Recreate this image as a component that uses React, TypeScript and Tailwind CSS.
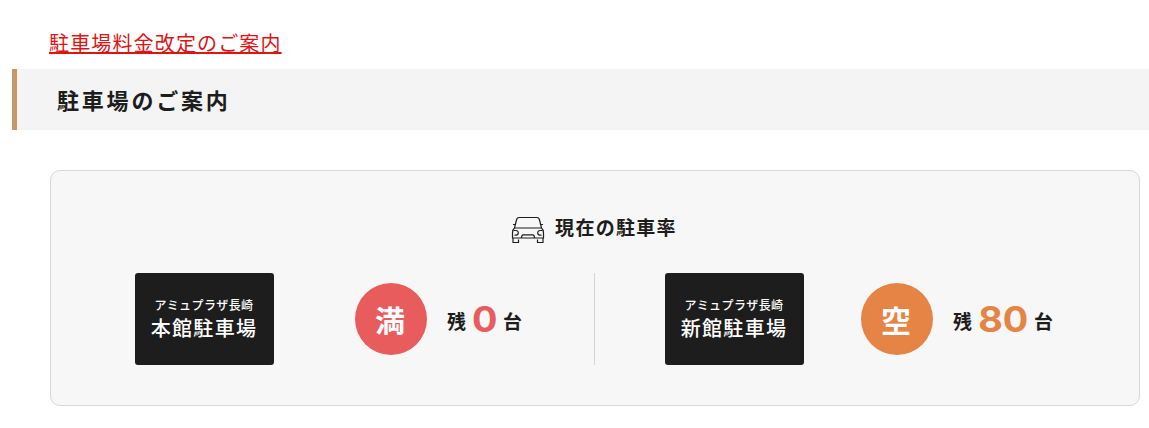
import clsx from 'clsx'

type ParkingLot = {
  name: string
  status: string
  remaining: number
  circleClass: string
  countClass: string
}

const lots: ParkingLot[] = [
  {
    name: '本館駐車場',
    status: '満',
    remaining: 0,
    circleClass: 'bg-[#e95c5d] ml-[81px]',
    countClass: 'text-[#e95c5d] w-[25px]',
  },
  {
    name: '新館駐車場',
    status: '空',
    remaining: 80,
    circleClass: 'bg-[#e68445] ml-[57px]',
    countClass: 'text-[#e68445] w-[50px]',
  },
]

function CarIcon() {
  return (
    <svg
      className="h-[28px] w-[34px] shrink-0"
      viewBox="0 0 34 28"
      fill="none"
      stroke="#1d1d1d"
      strokeWidth="1.2"
      strokeLinejoin="round"
      aria-hidden="true"
    >
      <path d="M3.500 12 5.600 3.500Q6.200 1.500 8 1.500h18Q27.800 1.500 28.400 3.500L30.500 12" />
      <path d="M3.500 12h27q2 1.500 2 5v5h-31v-5q0-3.500 2-5Z" />
      <path d="M2 8.500h2M30 8.500H32" />
      <path d="M2.500 14.500H5a2.300 2.300 0 0 1 0 4.600H3.500M31.500 14.500H29a2.300 2.300 0 0 0 0 4.600h1.500" />
      <path d="M10.500 22v-1.200q.5-2 1.800-2h9.400q1.300 0 1.800 2V22" />
      <path d="M2 22v4.500h5.500v-3M32 22v4.500h-5.500v-3" />
    </svg>
  )
}

function LotStatus({ lot }: { lot: ParkingLot }) {
  return (
    <>
      <div className="flex h-[92px] w-[139px] shrink-0 flex-col items-center rounded-[3px] bg-[#1d1d1d] pt-[24px] pr-px text-white">
        <p className="text-[12px] leading-[16px] font-medium tracking-[0.4px] whitespace-nowrap">アミュプラザ長崎</p>
        <p className="text-[20px] leading-[30px] font-medium tracking-[1.3px] whitespace-nowrap">{lot.name}</p>
      </div>
      <div
        className={clsx(
          'flex size-[72px] shrink-0 items-center justify-center rounded-full pr-[2px] pb-px text-[30px] leading-none font-bold text-white',
          lot.circleClass
        )}
      >
        {lot.status}
      </div>
      <p className="ml-[20px] flex items-center text-[19px] leading-[40px] font-bold whitespace-nowrap">
        <span className="pt-[4px]">残</span>
        <span
          className={clsx(
            'mx-[6px] flex justify-center font-[Inter,sans-serif] text-[35px] leading-[40px] font-bold',
            lot.countClass
          )}
        >
          <span className="inline-block scale-x-108">{lot.remaining}</span>
        </span>
        <span className="pt-[4px]">台</span>
      </p>
    </>
  )
}

export default function App() {
  return (
    <main className="h-[428px] overflow-hidden bg-white pt-[28px] font-['Noto_Sans_CJK_JP',sans-serif] text-[#1d1d1d]">
      <a
        href="#"
        className="ml-[49px] block w-fit text-[20px] leading-[30px] tracking-[1.15px] text-[#dc1414] underline"
      >
        駐車場料金改定のご案内
      </a>

      <h2 className="mt-[11px] ml-[12px] flex h-[61px] items-center border-l-[5px] border-[#c49a6c] bg-[#f4f4f4] pl-[40px] text-[22px] font-bold tracking-[2.8px]">
        駐車場のご案内
      </h2>

      <section className="mt-[40px] mr-[9px] ml-[50px] h-[236px] rounded-[10px] border border-[#d8d8d8] bg-[#f7f7f7] pt-[43px]">
        <h3 className="flex h-[32px] items-center justify-center gap-[10px] pr-[2px] text-[19px] font-bold tracking-[1.3px]">
          <CarIcon />
          <span className="pb-[5px]">現在の駐車率</span>
        </h3>

        <div className="mt-[27px] flex h-[92px]">
          <div className="flex w-[544px] items-center border-r border-[#d4d4d4] pl-[84px]">
            <LotStatus lot={lots[0]} />
          </div>
          <div className="flex flex-1 items-center pl-[70px]">
            <LotStatus lot={lots[1]} />
          </div>
        </div>
      </section>
    </main>
  )
}
